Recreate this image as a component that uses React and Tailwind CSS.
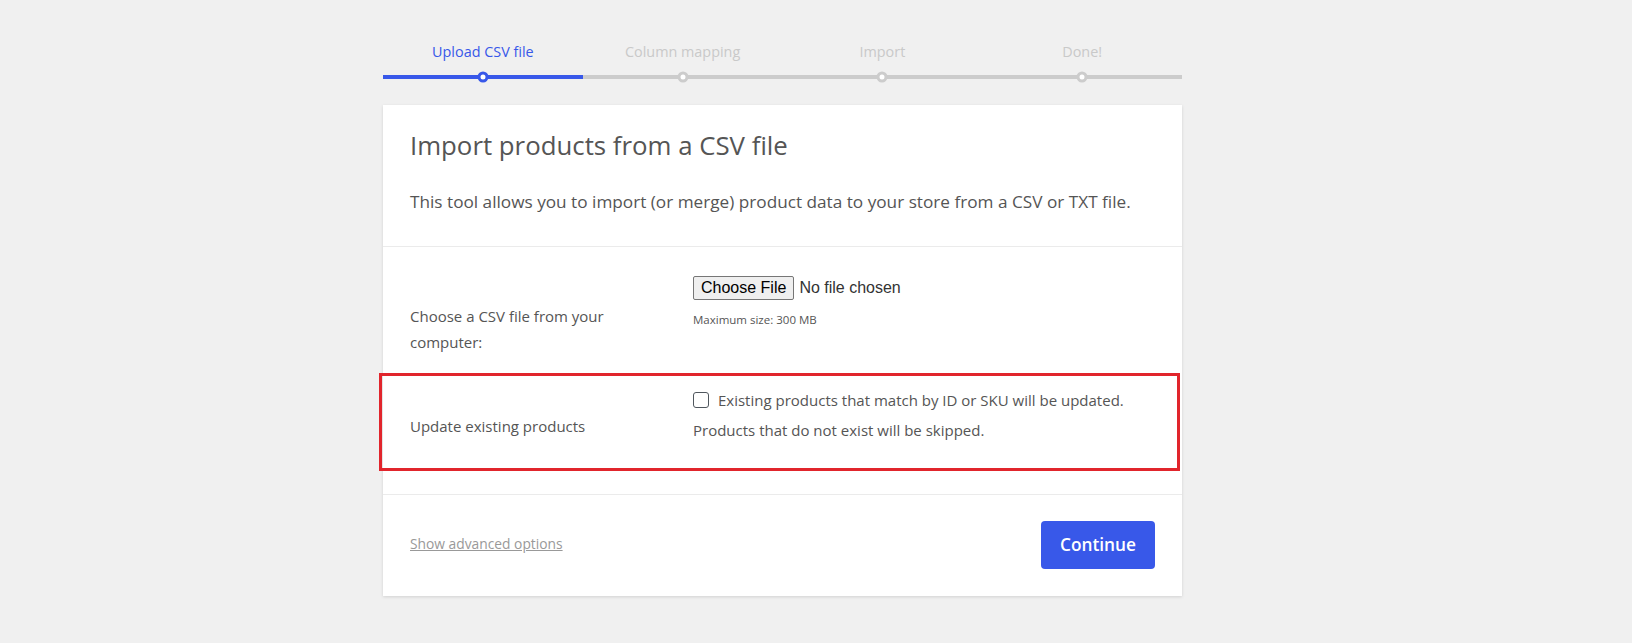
import React from 'react';

const steps = ['Upload CSV file', 'Column mapping', 'Import', 'Done!'];

const Steps = () => (
  <ol className="flex pt-[42px]">
    {steps.map((label, i) => (
      <li key={label} className="flex-1 flex flex-col items-center">
        <span className={`h-[20px] leading-[20px] text-[14.4px] ${i === 0 ? 'text-[#3858e9]' : 'text-[#c9c9c9]'}`}>
          {label}
        </span>
        <div className={`relative mt-[13px] h-[4px] w-full ${i === 0 ? 'bg-[#3858e9]' : 'bg-[#cccccc]'}`}>
          <span
            className={`absolute left-1/2 top-1/2 -translate-x-1/2 -translate-y-1/2 w-[11px] h-[11px] rounded-full bg-white border-[3px] ${i === 0 ? 'border-[#3858e9]' : 'border-[#cccccc]'}`}
          />
        </div>
      </li>
    ))}
  </ol>
);

export default function App() {
  return (
    <div className="min-h-screen bg-[#f0f0f0] font-['Open_Sans',sans-serif] text-[#555]">
      <div className="w-[799px] ml-[383px]">
        <Steps />

        <div className="mt-[26px] bg-white shadow-[0_1px_3px_rgba(0,0,0,0.13)]">
          {/* header */}
          <header className="px-[27px] pt-[28px] border-b border-[#ebebeb]">
            <h2 className="text-[25.8px] leading-none font-normal text-[#555] mb-[27px]">
              Import products from a CSV file
            </h2>
            <p className="text-[17.2px] leading-[32px] text-[#555] mb-[28px]">
              This tool allows you to import (or merge) product data to your store from a CSV or TXT file.
            </p>
          </header>

          {/* options */}
          <section className="px-[27px] pb-[23px]">
            <div className="grid grid-cols-[283px_1fr] pb-[18px]">
              <div className="pt-[56px] text-[15px] leading-[26px] w-[220px]">
                Choose a CSV file from your computer:
              </div>
              <div className="pt-[29px]">
                <div className="flex items-center h-[24px] font-['Liberation_Sans',Arial,sans-serif] text-[16px] text-[#222]">
                  <button
                    type="button"
                    className="h-[24px] px-[7px] bg-[#efefef] border border-[#767676] rounded-[2px] text-black leading-none"
                  >
                    Choose File
                  </button>
                  <span className="ml-[5px] text-[#333]">No file chosen</span>
                </div>
                <div className="mt-[12px] text-[11.5px] leading-[16px] text-[#555]">Maximum size: 300 MB</div>
              </div>
            </div>

            <div className="relative grid grid-cols-[283px_1fr] h-[98px]">
              <div className="pt-[38px] text-[15px] leading-[30px]">Update existing products</div>
              <div className="pt-[12px] text-[15px] leading-[30px]">
                <label className="flex items-center">
                  <span className="w-[16px] h-[16px] rounded-[3px] border-[1.5px] border-[#50575e] bg-white mr-[9px]" />
                  Existing products that match by ID or SKU will be updated.
                </label>
                <div>Products that do not exist will be skipped.</div>
              </div>
              <div className="absolute -left-[31px] -right-[25px] top-0 bottom-0 border-[3px] border-[#e1252c] pointer-events-none" />
            </div>
          </section>

          {/* actions */}
          <div className="flex items-center justify-between border-t border-[#ebebeb] px-[27px] pt-[26px] pb-[27px]">
            <a href="#" className="text-[13.8px] text-[#999] underline">Show advanced options</a>
            <button
              type="button"
              className="w-[114px] h-[48px] rounded-[4px] bg-[#3858e9] text-white text-[17.3px] font-semibold"
            >
              Continue
            </button>
          </div>
        </div>
      </div>
    </div>
  );
}
